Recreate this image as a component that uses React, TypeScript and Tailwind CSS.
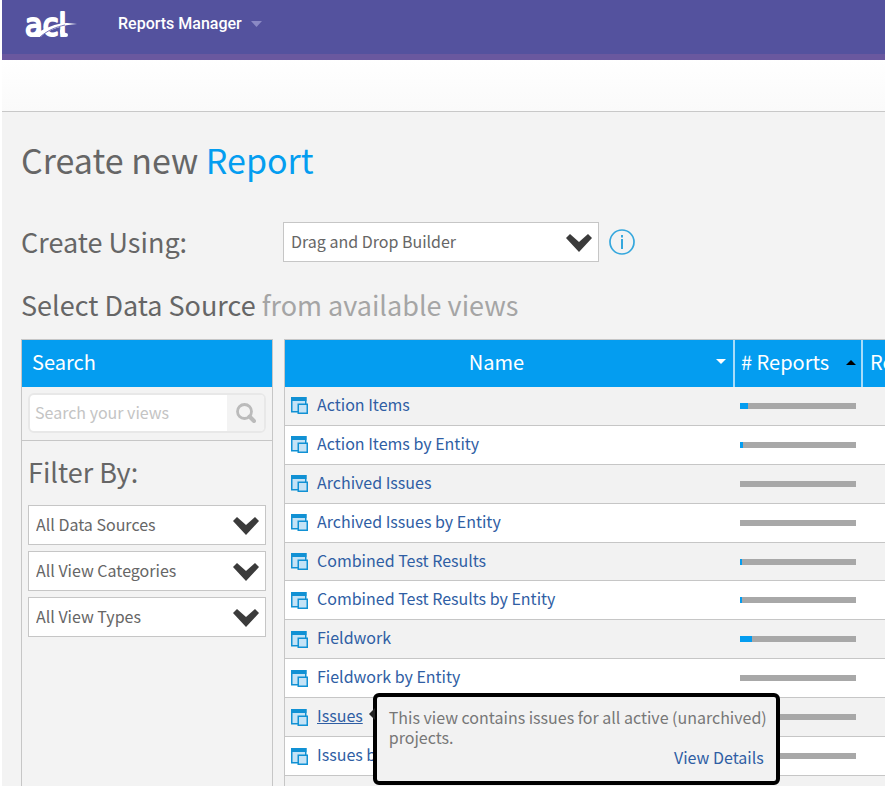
import React from "react";

type View = { name: string; share: number; tip?: string };

const views: View[] = [
  { name: "Action Items", share: 7 },
  { name: "Action Items by Entity", share: 3 },
  { name: "Archived Issues", share: 0 },
  { name: "Archived Issues by Entity", share: 0 },
  { name: "Combined Test Results", share: 2 },
  { name: "Combined Test Results by Entity", share: 2 },
  { name: "Fieldwork", share: 10 },
  { name: "Fieldwork by Entity", share: 0 },
  {
    name: "Issues",
    share: 0,
    tip: "This view contains issues for all active (unarchived) projects.",
  },
  { name: "Issues by Entity", share: 0 },
];

function Logo() {
  return (
    <svg width="56" height="48" viewBox="0 0 56 48" className="overflow-visible" role="img" aria-label="acl">
      <text
        x="2"
        y="36"
        fontFamily="'DejaVu Sans Condensed', 'Liberation Sans', sans-serif"
        fontSize="32"
        fill="#fff"
        stroke="#fff"
        strokeWidth="2"
        strokeLinejoin="round"
      >
        acl
      </text>
      <path d="M39 31 Q39 35 43 35" fill="none" stroke="#fff" strokeWidth="4" strokeLinecap="round" />
      <path d="M9 37 C20 28 34 23 44 23 L54 24 C40 25 26 29 17 37 Z" fill="#fff" />
      <path d="M17 37 C25 30 33 27 42 25" fill="none" stroke="#7876b8" strokeWidth="1" />
    </svg>
  );
}

function Chevron() {
  return (
    <svg
      className="pointer-events-none absolute top-[11px] right-[6px]"
      width="28"
      height="20"
      viewBox="0 0 28 20"
      aria-hidden="true"
    >
      <path d="M1 5 L5 1 L14 9 L23 1 L27 5 L14 19 Z" fill="#3b3b3b" />
    </svg>
  );
}

function Dropdown({ label, value }: { label: string; value: string }) {
  return (
    <div className="relative">
      <select
        aria-label={label}
        defaultValue={value}
        className="block h-10 w-full appearance-none border border-[#c6c6c6] bg-white pr-10 pb-[2px] pl-[7px] text-base text-[#666]"
      >
        <option>{value}</option>
      </select>
      <Chevron />
    </div>
  );
}

function ViewIcon() {
  return (
    <svg width="17" height="17" viewBox="0 0 17 17" className="shrink-0" aria-hidden="true">
      <rect x="0.75" y="0.75" width="14" height="14" fill="#c5e3f6" stroke="#1191d4" strokeWidth="1.5" />
      <rect x="0" y="0" width="15.5" height="4" fill="#1191d4" />
      <rect x="7.25" y="7.25" width="9" height="9" fill="#c5e3f6" stroke="#1191d4" strokeWidth="1.5" />
    </svg>
  );
}

function Tooltip({ text }: { text: string }) {
  return (
    <div
      role="tooltip"
      className="absolute top-1/2 left-full z-10 ml-[10px] h-[92px] w-[407px] -translate-y-[22px] rounded-md border-4 border-black bg-[#f2f2f2] pt-[10px] pl-3 text-base leading-5 text-[#777]"
    >
      <svg className="absolute top-[11px] -left-2" width="6" height="12" viewBox="0 0 6 12" aria-hidden="true">
        <path d="M6 0V12L0 6Z" fill="#222" />
      </svg>
      <p>{text}</p>
      <a href="#details" className="block pr-3 text-right text-[#2f5ea4]">
        View Details
      </a>
    </div>
  );
}

function SortArrow({ up = false }: { up?: boolean }) {
  return (
    <svg width="10" height="6" viewBox="0 0 10 6" aria-hidden="true">
      {up ? <path d="M0 6H10L5 1Z" fill="#000" /> : <path d="M0 0H10L5 5Z" fill="#fff" />}
    </svg>
  );
}

export default function App() {
  return (
    <div className="flex h-screen flex-col overflow-hidden bg-white px-[2px] font-['Noto_Sans_CJK_SC',sans-serif]">
      <header className="flex h-[60px] shrink-0 items-start border-b-6 border-[#6a589f] bg-[#54529e] pl-[21px]">
        <Logo />
        <button className="ml-[39px] flex h-[48px] items-center gap-[9px] font-['Roboto',sans-serif] text-base font-medium text-white">
          Reports Manager
          <svg width="11" height="6" viewBox="0 0 11 6" aria-hidden="true">
            <path d="M0 0H11L5.5 6Z" fill="#8b89c4" />
          </svg>
        </button>
      </header>
      <div className="h-[52px] shrink-0 border-b border-[#c8c8c8] bg-linear-to-b from-white to-[#fafafa]" />

      <main className="flex min-h-0 grow flex-col bg-[#f3f3f3] pl-[19px]">
        <h1 className="pt-[26px] text-[34px] leading-[44px] text-[#666]">
          Create new <span className="text-[#049df0]">Report</span>
        </h1>
        <div className="mt-10 flex items-center">
          <h2 className="w-[262px] shrink-0 text-[27px] leading-10 text-[#666]">Create Using:</h2>
          <div className="w-[316px]">
            <Dropdown label="Create Using" value="Drag and Drop Builder" />
          </div>
          <button aria-label="Information" className="ml-[10px]">
            <svg width="26" height="26" viewBox="0 0 26 26" fill="none" stroke="#35a7dd" aria-hidden="true">
              <circle cx="13" cy="13" r="12" strokeWidth="1.7" />
              <path d="M13 10V20" strokeWidth="2" />
              <path d="M13 6V8.5" strokeWidth="2" />
            </svg>
          </button>
        </div>
        <h2 className="mt-[23px] text-[27px] leading-10 text-[#666]">
          Select Data Source <span className="text-[#a5a5a5]">from available views</span>
        </h2>

        <div className="mt-[14px] flex min-h-0 grow gap-[11px]">
          <aside className="w-[252px] shrink-0 border border-b-0 border-[#c6c6c6]">
            <h3 className="h-[47px] bg-[#049df0] pl-[10px] text-xl leading-[43px] text-white">Search</h3>
            <div className="h-[54px] border-b border-[#c6c6c6] px-[6px] pt-[6px]">
              <div className="flex h-10 overflow-hidden rounded-md border-2 border-[#e8e8e8] bg-white">
                <input
                  aria-label="Search your views"
                  placeholder="Search your views"
                  className="min-w-0 grow pb-[2px] pl-[5px] text-base text-[#666] placeholder:text-[#c4c4c4]"
                />
                <button aria-label="Search" className="flex w-[37px] items-center justify-center bg-[#f3f3f3]">
                  <svg width="20" height="20" viewBox="0 0 20 20" fill="none" stroke="#bbb" aria-hidden="true">
                    <circle cx="8.5" cy="8.5" r="7" strokeWidth="2.8" />
                    <path d="M13.5 13.5L18 18" strokeWidth="4" strokeLinecap="round" />
                  </svg>
                </button>
              </div>
            </div>
            <div className="flex flex-col gap-[6px] px-[6px] pt-[11px]">
              <h2 className="pb-[7px] text-[27px] leading-10 text-[#666]">Filter By:</h2>
              <Dropdown label="Data source" value="All Data Sources" />
              <Dropdown label="View category" value="All View Categories" />
              <Dropdown label="View type" value="All View Types" />
            </div>
          </aside>

          <div className="min-w-0 grow overflow-hidden border-t border-l border-[#c6c6c6]">
            <table className="h-[474px] w-full table-fixed border-collapse text-base">
              <thead>
                <tr className="h-[47px] bg-[#049df0] text-xl leading-[43px] text-white">
                  <th className="w-[449px] border-r-2 border-[#a8dcf9] p-0 align-top font-normal">
                    <button className="flex w-full items-center pr-[7px]">
                      <span className="grow pr-2">Name</span>
                      <SortArrow />
                    </button>
                  </th>
                  <th className="w-[128px] border-r-2 border-[#a8dcf9] p-0 align-top font-normal">
                    <button className="flex w-full items-center justify-between pr-[5px] pl-[6px]">
                      # Reports
                      <SortArrow up />
                    </button>
                  </th>
                  <th className="overflow-hidden p-0 pl-[7px] text-left align-top font-normal whitespace-nowrap">
                    Re
                  </th>
                </tr>
              </thead>
              <tbody>
                {views.map((view) => (
                  <tr key={view.name} className="border-b border-[#c6c6c6] odd:bg-[#f2f2f2] even:bg-white">
                    <td className="p-0">
                      <div className="flex h-6 items-center gap-[9px] pl-[6px] leading-6">
                        <ViewIcon />
                        <span className="relative -mt-1">
                          <a href="#view" className={view.tip ? "text-[#2f5ea4] underline" : "text-[#2f5ea4]"}>
                            {view.name}
                          </a>
                          {view.tip && <Tooltip text={view.tip} />}
                        </span>
                      </div>
                    </td>
                    <td className="p-0 pr-[6px] pl-[6px]">
                      <div className="h-[6px] bg-[#a8a8a8]">
                        <div className="h-full bg-[#049df0]" style={{ width: `${view.share}%` }} />
                      </div>
                    </td>
                    <td />
                  </tr>
                ))}
                <tr className="bg-[#f2f2f2]">
                  <td className="p-0">
                    <div className="h-6" />
                  </td>
                  <td />
                  <td />
                </tr>
              </tbody>
            </table>
          </div>
        </div>
      </main>
    </div>
  );
}
